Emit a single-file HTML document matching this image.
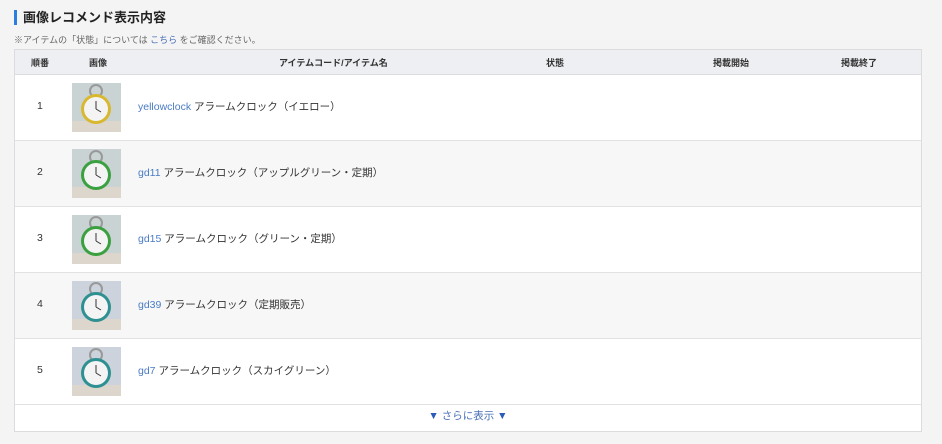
<!DOCTYPE html>
<html><head><meta charset="utf-8"><style>
body{margin:0;background:#f4f4f5;font-family:"Liberation Sans","Noto Sans CJK JP",sans-serif;width:942px;height:444px;overflow:hidden;position:relative;color:#333}
.h{position:absolute;left:14px;top:10px;border-left:3px solid #2a7de1;padding-left:6px;font-size:13px;font-weight:bold;line-height:15px;color:#222}
.n{position:absolute;left:14px;top:33px;font-size:9px;color:#666}
.n a{color:#4a6fb5}
.t{position:absolute;left:14px;top:49px;width:908px;height:383px;border:1px solid #dcdcdf;background:#fff;box-sizing:border-box}
.hd{height:24px;background:#eeeff2;border-bottom:1px solid #dcdcdf;font-size:9px;font-weight:bold;position:relative;color:#333}
.hd span{position:absolute;top:6px}
.r{height:65px;border-bottom:1px solid #e2e2e2;position:relative;font-size:10.5px}
.r:nth-child(even){background:#f7f7f7}
.r .num{position:absolute;left:22px;top:25px}
.r svg{position:absolute;left:57px;top:8px}
.r .nm{position:absolute;left:123px;top:24px;color:#333}
.r .nm b{font-weight:normal;color:#4a7cc4}
.f{text-align:center;font-size:10.5px;color:#4a6fb5;height:24px;line-height:22px}
</style></head><body>
<div class="h">画像レコメンド表示内容</div>
<div class="n">※アイテムの「状態」については <a>こちら</a> をご確認ください。</div>
<div class="t">
<div class="hd"><span style="left:16px">順番</span><span style="left:74px">画像</span><span style="left:264px">アイテムコード/アイテム名</span><span style="left:531px">状態</span><span style="left:698px">掲載開始</span><span style="left:826px">掲載終了</span></div>
<div>
<div class="r"><span class="num">1</span><svg width="49" height="49"><rect width="49" height="49" fill="#c9d3d3"/><rect y="38" width="49" height="11" fill="#ddd6cc"/><circle cx="24" cy="8" r="6" fill="none" stroke="#999" stroke-width="2"/><circle cx="24" cy="26" r="15" fill="#d8b830"/><circle cx="24" cy="26" r="12" fill="#f4f4f4"/><path d="M24 26V18M24 26l5 3" stroke="#333"/></svg><span class="nm"><b>yellowclock</b> アラームクロック（イエロー）</span></div>
<div class="r"><span class="num">2</span><svg width="49" height="49"><rect width="49" height="49" fill="#c9d3d3"/><rect y="38" width="49" height="11" fill="#ddd6cc"/><circle cx="24" cy="8" r="6" fill="none" stroke="#999" stroke-width="2"/><circle cx="24" cy="26" r="15" fill="#3ba040"/><circle cx="24" cy="26" r="12" fill="#f4f4f4"/><path d="M24 26V18M24 26l5 3" stroke="#333"/></svg><span class="nm"><b>gd11</b> アラームクロック（アップルグリーン・定期）</span></div>
<div class="r"><span class="num">3</span><svg width="49" height="49"><rect width="49" height="49" fill="#c9d3d3"/><rect y="38" width="49" height="11" fill="#ddd6cc"/><circle cx="24" cy="8" r="6" fill="none" stroke="#999" stroke-width="2"/><circle cx="24" cy="26" r="15" fill="#3ba040"/><circle cx="24" cy="26" r="12" fill="#f4f4f4"/><path d="M24 26V18M24 26l5 3" stroke="#333"/></svg><span class="nm"><b>gd15</b> アラームクロック（グリーン・定期）</span></div>
<div class="r"><span class="num">4</span><svg width="49" height="49"><rect width="49" height="49" fill="#ccd3dc"/><rect y="38" width="49" height="11" fill="#ddd6cc"/><circle cx="24" cy="8" r="6" fill="none" stroke="#999" stroke-width="2"/><circle cx="24" cy="26" r="15" fill="#2e9090"/><circle cx="24" cy="26" r="12" fill="#f4f4f4"/><path d="M24 26V18M24 26l5 3" stroke="#333"/></svg><span class="nm"><b>gd39</b> アラームクロック（定期販売）</span></div>
<div class="r"><span class="num">5</span><svg width="49" height="49"><rect width="49" height="49" fill="#ccd3dc"/><rect y="38" width="49" height="11" fill="#ddd6cc"/><circle cx="24" cy="8" r="6" fill="none" stroke="#999" stroke-width="2"/><circle cx="24" cy="26" r="15" fill="#2e9090"/><circle cx="24" cy="26" r="12" fill="#f4f4f4"/><path d="M24 26V18M24 26l5 3" stroke="#333"/></svg><span class="nm"><b>gd7</b> アラームクロック（スカイグリーン）</span></div>
</div>
<div class="f"><span style="color:#2a5cb8">▼</span> さらに表示 <span style="color:#2a5cb8">▼</span></div>
</div>
</body></html>
